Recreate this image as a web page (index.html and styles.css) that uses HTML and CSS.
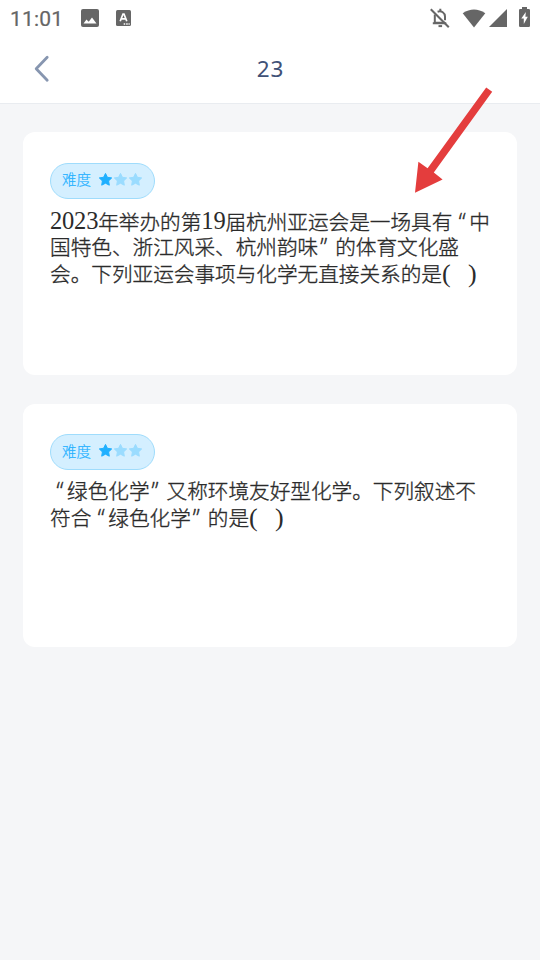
FILE: index.html
```
<!DOCTYPE html>
<html lang="zh-CN">
<head>
<meta charset="utf-8">
<title>23</title>
<link rel="stylesheet" href="styles.css">
</head>
<body>
<svg class="defs" width="0" height="0">
  <symbol id="star" viewBox="0 0 15 15"><path d="M7.5 1.4 9.4 5.3 13.7 5.9 10.6 8.9 11.3 13.2 7.5 11.2 3.7 13.2 4.4 8.9 1.3 5.9 5.6 5.3Z" fill="currentColor" stroke="currentColor" stroke-width="1" stroke-linejoin="round"/></symbol>
</svg>
<header class="top">
  <div class="status">
    <span class="clock">11:01</span>
    <svg class="s-image" width="18" height="18" viewBox="0 0 18 18"><rect width="18" height="18" rx="2" fill="#666"/><path d="M2.5 14.5 5.5 10.4 7.7 12.8 11 8.5 15.5 14.5Z" fill="#fff"/></svg>
    <svg class="s-lang" width="15" height="16" viewBox="0 0 15 16"><rect width="15" height="16" rx="1.5" fill="#666"/><path d="M4.2 11.2 7 4h1l2.8 7.2M5.4 8.9h4.2" fill="none" stroke="#fff" stroke-width="1.7"/><path d="M7.7 14h1.5M10.2 14h1.5M12.5 14h1.2" stroke="#fff" stroke-width="1.3"/></svg>
    <span class="grow"></span>
    <svg class="s-bell" width="20" height="20" viewBox="0 0 20 20" fill="none" stroke="#666" stroke-width="2"><path d="M4.8 6.6V14.8H15M2.8 15.2H16.3M7.6 3.7C11.5 2.5 15 4.8 15 8.5V12.3M10.3 .7V3.5"/><path d="M8.5 18.1h3.6" stroke-width="2"/><path d="M.8 1.2 18.8 19.2"/></svg>
    <svg class="s-wifi" width="24" height="19" viewBox="0 0 24 19"><path d="M.7 4.2Q12-3.3 23.3 4.2L12 18.5Z" fill="#666"/></svg>
    <svg class="s-cell" width="18" height="18" viewBox="0 0 18 18"><path d="M18 0V18H0Z" fill="#666"/></svg>
    <svg class="s-batt" width="11" height="20" viewBox="0 0 11 20"><path d="M3 0h5v2h1.8Q11 2 11 3.2V18.8Q11 20 9.8 20H1.2Q0 20 0 18.8V3.2Q0 2 1.2 2H3Z" fill="#666"/><path d="M6.8 5 2.3 11.6H4.8V17L8.8 9.8H6.4Z" fill="#fff"/></svg>
  </div>
  <nav class="bar">
    <svg class="back" width="16" height="28" viewBox="0 0 16 28"><path d="M13.2 2.2 2.2 13.8 13.2 25.2" fill="none" stroke="#8796b0" stroke-width="2.8" stroke-linecap="round" stroke-linejoin="round"/></svg>
    <h1 class="title">23</h1>
  </nav>
</header>
<main class="list">
  <article class="card">
    <div class="badge"><span class="label">难度</span><svg class="star on"><use href="#star"/></svg><svg class="star"><use href="#star"/></svg><svg class="star"><use href="#star"/></svg></div>
    <div class="question">
      <p class="mixed"><span class="num">2023</span>年举办的第<span class="num">19</span>届杭州亚运会是一场具有<span class="q open">“</span>中</p>
      <p>国特色、浙江风采、杭州韵味<span class="q">”</span>的体育文化盛</p>
      <p>会。下列亚运会事项与化学无直接关系的是<span class="paren">(</span><span class="paren close">)</span></p>
    </div>
  </article>
  <article class="card">
    <div class="badge"><span class="label">难度</span><svg class="star on"><use href="#star"/></svg><svg class="star"><use href="#star"/></svg><svg class="star"><use href="#star"/></svg></div>
    <div class="question">
      <p><span class="q open">“</span>绿色化学<span class="q">”</span>又称环境友好型化学。下列叙述不</p>
      <p>符合<span class="q open">“</span>绿色化学<span class="q">”</span>的是<span class="paren">(</span><span class="paren close">)</span></p>
    </div>
  </article>
</main>
<svg class="arrow" width="80" height="108" viewBox="0 0 80 108"><path d="M72.2 1.5 78.2 5.8 19.8 86.4 28.6 93.4 1 106.8 4.4 75.8 13.6 82.2Z" fill="#e43d3d"/></svg>
</body>
</html>
```
FILE: styles.css
```
* { box-sizing: border-box; margin: 0; padding: 0; }
body {
  position: relative;
  width: 540px;
  height: 960px;
  overflow: hidden;
  background: #f5f6f8;
  font-family: "Liberation Sans", "Noto Sans CJK SC", sans-serif;
  font-weight: 300;
  color: #2b2b2b;
}
svg { display: block; flex: none; }
.defs { position: absolute; }
.top { height: 104px; background: #fff; border-bottom: 1px solid #e9ecf0; }
.status { display: flex; align-items: center; height: 36px; padding: 0 10px; }
.clock { width: 71.4px; padding-top: 2px; font: 400 21px/36px Roboto, sans-serif; letter-spacing: .2px; color: #666; -webkit-text-stroke: .2px #666; }
.s-lang { margin-left: 16.6px; }
.grow { flex: 1; }
.s-wifi { margin-left: 12px; }
.s-cell { margin-left: 3px; }
.s-batt { margin-left: 12px; margin-top: -2px; }
.bar { display: grid; grid-template-columns: 80px 1fr 80px; align-items: center; height: 66px; }
.back { margin-left: 33.5px; }
.title { padding-left: 1px; font: 400 22.5px/30px "Noto Sans", sans-serif; letter-spacing: .8px; text-align: center; color: #3f5177; }
.list { display: flex; flex-direction: column; gap: 29px; padding: 28px 23px; }
.card { height: 243px; padding: 31px 27px; background: #fff; border-radius: 12px; }
.card + .card { padding-top: 30px; }
.badge { display: flex; align-items: center; width: 105px; height: 36px; padding: 0 11px; background: #d4efff; border: 1px solid #9fdcfc; border-radius: 18px; }
.label { width: 36px; font-size: 14.5px; line-height: 20px; color: #22b0ff; margin-top: -2px; -webkit-text-stroke: .2px; }
.card + .card .label { margin-top: 0; }
.star { width: 15px; height: 15px; margin-top: -3px; color: #9adcff; }
.star.on { color: #1fb0ff; }
.question { margin-top: 10px; font-size: 20.63px; -webkit-text-stroke: .35px; }
.card + .card .question { margin-top: 9px; }
.question p { height: 26.2px; line-height: 26.2px; white-space: nowrap; }
.question .mixed { line-height: 27.6px; }
.num { font-family: "Liberation Serif", serif; font-size: 24.5px; font-weight: 400; line-height: 1; letter-spacing: -.2px; vertical-align: 1px; -webkit-text-stroke: 0; }
.q { display: inline-block; width: 17px; padding-left: 2px; font-family: "Open Sans", sans-serif; font-size: 23px; line-height: 1; -webkit-text-stroke: .4px; }
.q.open { padding-left: 6.5px; }
.paren { display: inline-block; width: 26px; font: 400 26px/1 "Liberation Serif", serif; -webkit-text-stroke: 0; }
.paren.close { width: 10px; }
.arrow { position: absolute; left: 414px; top: 86px; }
```
